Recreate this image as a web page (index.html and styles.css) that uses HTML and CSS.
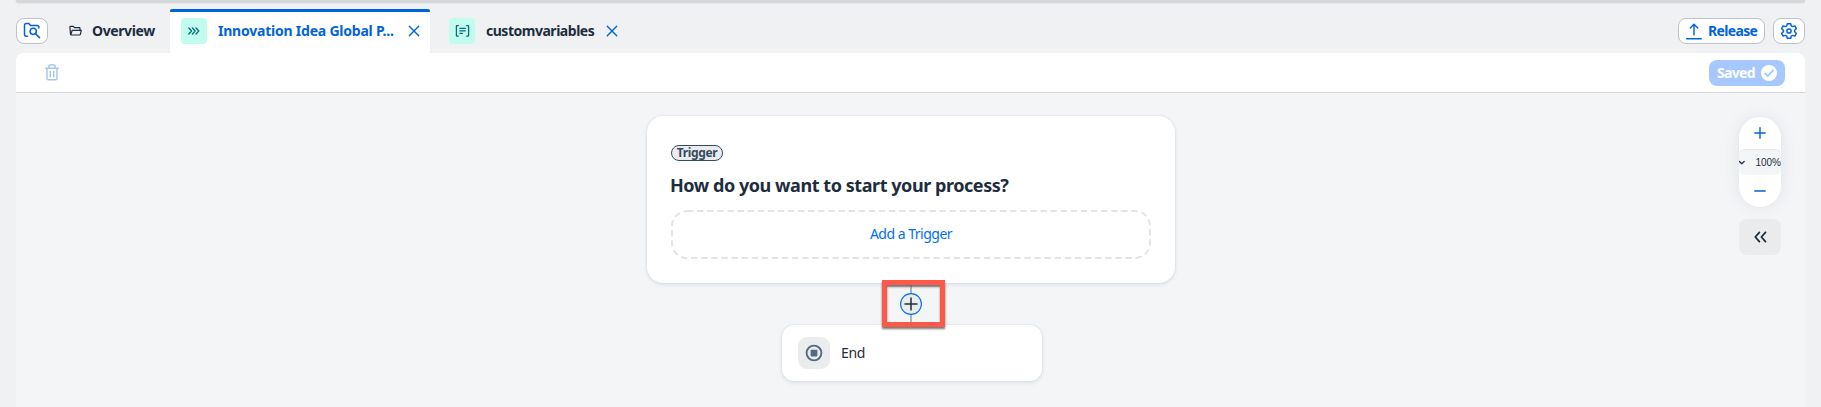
FILE: index.html
```html
<!DOCTYPE html>
<html lang="en">
<head>
<meta charset="utf-8">
<title>Process Builder</title>
<link rel="stylesheet" href="styles.css">
</head>
<body>
<div class="shell-bar"></div>
<header class="tabs">
  <button class="btn icon-btn" aria-label="Browse">
    <svg width="18" height="18" viewBox="0 0 18 18" fill="none" stroke="#0064d9" stroke-width="1.5" stroke-linecap="round" stroke-linejoin="round"><path d="M4.5 14.2H3.2Q1.5 14.2 1.5 12.5V3.2Q1.5 1.5 3.2 1.5H5.8L7.6 3.6H14Q15.9 3.6 15.9 5.4V6"/><circle cx="10.2" cy="9.3" r="3.1"/><path d="M12.5 11.6L16.5 15.6"/></svg>
  </button>
  <div class="tab overview">
    <svg width="13" height="12" viewBox="0 0 13 12" fill="none" stroke="#1d2d3e" stroke-width="1.2" stroke-linejoin="round"><path d="M1.6 9.6L.9 2.2Q.9 1.3 1.8 1.3H4.2L5.5 2.7H10.2Q11 2.7 11 3.5V5M1.8 9.8L3.2 5.3H12.3L11.4 9.2Q11.2 10 10.4 10H2.2Q1.6 10 1.6 9.3"/></svg>
    <span class="tab-label overview-label">Overview</span>
  </div>
  <div class="tab active">
    <span class="tile"><svg width="14" height="10" viewBox="0 0 14 10" fill="none" stroke="#046c7a" stroke-width="1.25" stroke-linejoin="round" stroke-linecap="round"><path d="M1.8 2L4.6 5L1.8 8M5.4 2L8.2 5L5.4 8M9 2L11.8 5L9 8"/></svg></span>
    <span class="tab-label process-label">Innovation Idea Global P...</span>
    <svg class="close" width="12" height="12" viewBox="0 0 12 12" fill="none" stroke="#0064d9" stroke-width="1.4" stroke-linecap="round"><path d="M1.3 1.3L10.7 10.7M10.7 1.3L1.3 10.7"/></svg>
  </div>
  <div class="tab variables">
    <span class="tile"><svg width="15" height="14" viewBox="0 0 15 14" fill="none" stroke="#046c7a" stroke-width="1.25" stroke-linecap="round" stroke-linejoin="round"><path d="M3.4 1.5H2Q1.4 1.5 1.4 2.1V11.5Q1.4 12.1 2 12.1H3.4M11.6 1.5H13Q13.6 1.5 13.6 2.1V11.5Q13.6 12.1 13 12.1H11.6M4.8 4.3H10.3M4.8 6.8H10.3M4.8 9.3H7.5"/></svg></span>
    <span class="tab-label variables-label">customvariables</span>
    <svg class="close" width="12" height="12" viewBox="0 0 12 12" fill="none" stroke="#0064d9" stroke-width="1.4" stroke-linecap="round"><path d="M1.3 1.3L10.7 10.7M10.7 1.3L1.3 10.7"/></svg>
  </div>
  <div class="actions">
    <button class="btn release">
      <svg width="16" height="17" viewBox="0 0 16 17" fill="none" stroke="#0064d9" stroke-width="1.4" stroke-linecap="round" stroke-linejoin="round"><path d="M8 12V1.5M4.2 5L8 1.2L11.8 5M.7 15.8H15.3"/></svg>
      <span class="release-label">Release</span>
    </button>
    <button class="btn icon-btn" aria-label="Settings">
      <svg width="18" height="18" viewBox="0 0 18 18" fill="none" stroke="#0064d9" stroke-width="1.5" stroke-linejoin="round"><path d="M7.3 1.7H10.7L11.2 3.8L12.6 4.6L14.9 3.9L16.3 6.7L14.6 8.2V9.8L16.3 11.3L14.9 14.1L12.6 13.4L11.2 14.2L10.7 16.3H7.3L6.8 14.2L5.4 13.4L3.1 14.1L1.7 11.3L3.4 9.8V8.2L1.7 6.7L3.1 3.9L5.4 4.6L6.8 3.8Z"/><circle cx="9" cy="9" r="2.1"/></svg>
    </button>
  </div>
</header>
<main class="panel">
  <div class="toolbar">
    <svg class="trash" width="14" height="17" viewBox="0 0 14 17" fill="none" stroke="#a6c4f0" stroke-width="1.4" stroke-linecap="round" stroke-linejoin="round"><path d="M.7 4.2H13.3M3.9 4V2Q3.9 1 4.9 1H9.1Q10.1 1 10.1 2V4M2 4.4V14.6Q2 15.8 3.2 15.8H10.8Q12 15.8 12 14.6V4.4M5.3 7.5V12.7M8.7 7.5V12.7"/></svg>
    <button class="saved"><span class="saved-label">Saved</span>
      <svg width="16" height="16" viewBox="0 0 16 16"><circle cx="8" cy="8" r="8" fill="#fff"/><path d="M4.1 8.5L6.8 11.1L12 5.3" fill="none" stroke="#a6c8ff" stroke-width="1.8" stroke-linecap="round" stroke-linejoin="round"/></svg>
    </button>
  </div>
  <section class="canvas">
    <article class="node trigger-card">
      <span class="badge">Trigger</span>
      <h1 class="question">How do you want to start your process?</h1>
      <div class="drop">
        <svg class="dash" width="480" height="49"><rect x="1" y="1" width="478" height="47" rx="15" fill="none" stroke="#e4e4e4" stroke-width="2" stroke-dasharray="6.3 3.8"/></svg>
        <span class="add-label">Add a Trigger</span>
      </div>
    </article>
    <div class="node link"></div>
    <div class="node plus"><svg width="22" height="22" viewBox="0 0 22 22"><circle cx="11" cy="11" r="10.4" fill="#eaecee" stroke="#0070f2" stroke-width="1.1"/><path d="M11 5V17M5 11H17" stroke="#1d2d3e" stroke-width="1.5" stroke-linecap="round"/></svg></div>
    <article class="node end-card">
      <span class="end-icon"><svg width="18" height="18" viewBox="0 0 18 18"><circle cx="9" cy="9" r="7.4" fill="none" stroke="#556b82" stroke-width="1.9"/><rect x="5.6" y="5.8" width="6.8" height="6.6" rx=".8" fill="#556b82"/></svg></span>
      <span class="end-label">End</span>
    </article>
    <div class="node highlight"></div>
    <aside class="controls">
      <div class="zoom">
        <svg width="12" height="12" viewBox="0 0 12 12"><path d="M6 .8V11.2M.8 6H11.2" stroke="#0064d9" stroke-width="1.4" stroke-linecap="round"/></svg>
        <div class="level"><svg width="6" height="6" viewBox="0 0 6 6" fill="none" stroke="#1d2d3e" stroke-width="1.3" stroke-linecap="round" stroke-linejoin="round"><path d="M.4 1.4L2.8 3.8L5.2 1.4"/></svg><span>100%</span></div>
        <svg width="12" height="12" viewBox="0 0 12 12"><path d="M.8 6H11.2" stroke="#0064d9" stroke-width="1.4" stroke-linecap="round"/></svg>
      </div>
      <button class="collapse" aria-label="Collapse"><svg width="13" height="12" viewBox="0 0 13 12" fill="none" stroke="#1d2d3e" stroke-width="1.8" stroke-linecap="round" stroke-linejoin="round"><path d="M5.4 1.4L1.3 6L5.4 10.6M11.5 1.4L7.4 6L11.5 10.6"/></svg></button>
    </aside>
  </section>
</main>
</body>
</html>
```
FILE: styles.css
```css
* { box-sizing: border-box; }
body { margin: 0; height: 407px; overflow: hidden; background: #eff1f3; color: #1d2d3e; font: 14px "Noto Sans", sans-serif; }
svg { display: block; flex: none; }
button { font: inherit; margin: 0; padding: 0; }
span, h1 { white-space: nowrap; }
.shell-bar { height: 3px; margin: 0 16px; background: #d5d8da; border-radius: 0 0 8px 8px; box-shadow: 0 0 2px #c9cdd1; }
.tabs { display: flex; height: 50px; padding: 6px 16px 0; align-items: stretch; font-weight: 700; }
.btn { display: flex; align-items: center; justify-content: center; height: 26px; margin-top: 9px; border: 1px solid #bcc3ca; border-radius: 8px; background: #fff; color: #0064d9; font-weight: 700; }
.icon-btn { width: 32px; }
.tab { display: flex; align-items: center; }
.tab-label, .end-label, .add-label { padding-bottom: 2px; }
.overview { width: 122px; padding-left: 21px; gap: 10px; }
.active { width: 260px; border-top: 3px solid #0064d9; background: #fff; border-radius: 2px 2px 0 0; padding-left: 11px; color: #0064d9; padding-bottom: 3px; }
.variables { padding-left: 19px; }
.tile { display: grid; place-items: center; width: 26px; height: 26px; border-radius: 4px; background: #c2fcee; margin-right: 12px; }
.close { margin-left: 14px; }
.variables .close { margin-left: 11px; }
.overview-label { width: 62px; letter-spacing: -0.4px; }
.process-label { width: 176px; margin-left: -1px; letter-spacing: -0.22px; }
.variables-label { width: 108px; margin-left: -1px; letter-spacing: -0.48px; }
.variables .close { margin-left: 12px; }
.actions { display: flex; gap: 8px; margin-left: auto; }
.release { width: 87px; gap: 6px; }
.release-label { width: 49px; letter-spacing: -0.65px; padding-bottom: 1px; }
.panel { height: 354px; margin: 0 16px; border-radius: 8px 8px 0 0; background: #f4f5f7; overflow: hidden; }
.toolbar { display: flex; align-items: center; justify-content: space-between; height: 40px; padding: 0 20px 0 29px; background: #fff; border-bottom: 1px solid #d9d9d9; }
.saved { display: flex; align-items: center; justify-content: center; gap: 6px; width: 76px; height: 26px; border: 0; border-radius: 8px; background: #a6c8ff; color: #fff; font-weight: 700; }
.saved-label { width: 38px; letter-spacing: -0.7px; }
.canvas { position: relative; height: 314px; }
.node { position: absolute; }
.trigger-card { left: 631px; top: 23px; width: 528px; height: 167px; padding: 29px 24px 0; border-radius: 16px; background: #fff; box-shadow: 0 0 2px #c9d1dc, 0 2px 4px #dfe3e9; }
.badge { display: flex; align-items: center; justify-content: center; width: 52px; height: 16px; border: 1px solid #354a5f; border-radius: 8px; background: #eaecee; color: #354a5f; font-size: 12px; font-weight: 700; line-height: 14px; letter-spacing: -0.35px; }
.question { margin: 11px 0 0 -1px; font-size: 18px; line-height: 26px; font-weight: 700; letter-spacing: -0.44px; }
.drop { display: grid; height: 49px; margin-top: 12px; place-items: center; color: #0070f2; }
.drop > * { grid-area: 1 / 1; }
.add-label { letter-spacing: -0.5px; }
.link { left: 894px; top: 190px; width: 2px; height: 42px; background: #a9b4c2; }
.plus { left: 884px; top: 200px; }
.end-card { display: flex; align-items: center; gap: 11px; left: 766px; top: 232px; width: 260px; height: 56px; padding: 0 16px; border-radius: 12px; background: #fff; box-shadow: 0 0 2px #c9d1dc, 0 2px 4px #dfe3e9; }
.end-label { letter-spacing: -0.4px; }
.end-icon { display: grid; place-items: center; width: 32px; height: 32px; border-radius: 9px; background: #eaecee; }
.highlight { left: 866px; top: 187px; width: 63px; height: 47px; border: 5px solid #ff5748; box-shadow: 0 2px 2px #555c, inset 0 2px 2px #555c; }
.controls { position: absolute; right: 24px; top: 24px; width: 42px; }
.zoom { display: flex; flex-direction: column; align-items: center; justify-content: space-between; height: 90px; padding: 10px 0; border-radius: 21px; background: #fff; box-shadow: 0 0 16px #dfe3e8; }
.level { display: flex; align-items: center; justify-content: space-between; width: 42px; height: 26px; border-radius: 6px; border-top: 1px solid #e5e7e9; background: #f4f5f7; font: 10px "Liberation Sans", sans-serif; }
.collapse { display: grid; place-items: center; width: 42px; height: 36px; margin-top: 12px; border: 0; border-radius: 8px; background: #eaebec; }
```
